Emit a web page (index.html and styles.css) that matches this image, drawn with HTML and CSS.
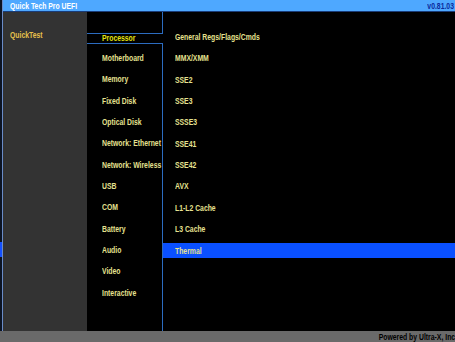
FILE: index.html
```html
<!DOCTYPE html>
<html lang="en">
<head>
    <meta charset="UTF-8">
    <meta name="viewport" content="width=device-width, initial-scale=1.0">
    <title>Quick Tech Pro UEFI</title>
    <link rel="stylesheet" href="styles.css">
</head>
<body>
    <div class="screen">
        <div class="edge">
            <div class="edge-mark"></div>
        </div>
        <div class="window">
            <div class="titlebar">
                <span class="txt title">Quick Tech Pro UEFI</span>
                <span class="txt version">v0.81.03</span>
            </div>
            <div class="panels">
                <div class="modes">
                    <div class="mode"><span class="txt">QuickTest</span></div>
                </div>
                <div class="groups">
                    <div class="tab-top"></div>
                    <div class="tab-active"><span class="txt">Processor</span></div>
                    <div class="tab-rest">
                        <div class="item"><span class="txt">Motherboard</span></div>
                        <div class="item"><span class="txt">Memory</span></div>
                        <div class="item"><span class="txt">Fixed Disk</span></div>
                        <div class="item"><span class="txt">Optical Disk</span></div>
                        <div class="item"><span class="txt">Network: Ethernet</span></div>
                        <div class="item"><span class="txt">Network: Wireless</span></div>
                        <div class="item"><span class="txt">USB</span></div>
                        <div class="item"><span class="txt">COM</span></div>
                        <div class="item"><span class="txt">Battery</span></div>
                        <div class="item"><span class="txt">Audio</span></div>
                        <div class="item"><span class="txt">Video</span></div>
                        <div class="item"><span class="txt">Interactive</span></div>
                    </div>
                </div>
                <div class="tests">
                    <div class="item"><span class="txt">General Regs/Flags/Cmds</span></div>
                    <div class="item"><span class="txt">MMX/XMM</span></div>
                    <div class="item"><span class="txt">SSE2</span></div>
                    <div class="item"><span class="txt">SSE3</span></div>
                    <div class="item"><span class="txt">SSSE3</span></div>
                    <div class="item"><span class="txt">SSE41</span></div>
                    <div class="item"><span class="txt">SSE42</span></div>
                    <div class="item"><span class="txt">AVX</span></div>
                    <div class="item"><span class="txt">L1-L2 Cache</span></div>
                    <div class="item"><span class="txt">L3 Cache</span></div>
                    <div class="item selected"><span class="txt">Thermal</span></div>
                </div>
            </div>
        </div>
    </div>
    <div class="footer"><span class="txt">Powered by Ultra-X, Inc</span></div>
</body>
</html>
```

FILE: styles.css
```css
* {
    box-sizing: border-box;
}
body {
    margin: 0;
    width: 455px;
    height: 342px;
    overflow: hidden;
    background: #000;
    font-family: "Liberation Sans", Arial, sans-serif;
    font-size: 9.5px;
    font-weight: bold;
}
/* the screen font is a narrow one, squeeze the labels */
.txt {
    display: inline-block;
    transform: scaleX(0.72);
    transform-origin: left center;
    white-space: nowrap;
}
.screen {
    display: flex;
    height: 331px;
}
.edge {
    width: 3px;
    background: #0c1424;
    border-right: 1px solid #6a8cc8;
}
.edge-mark {
    margin-top: 242px;
    width: 2px;
    height: 15px;
    background: #1450ff;
}
.window {
    flex: 1;
    display: flex;
    flex-direction: column;
}
.titlebar {
    height: 12px;
    background: #4ea8ff;
    border-bottom: 1px solid #1a3c78;
    display: flex;
    justify-content: space-between;
    align-items: center;
    padding-left: 7px;
    line-height: 11px;
    white-space: nowrap;
    overflow: hidden;
}
.title {
    color: #fff;
}
.version {
    color: #0c2a9c;
    transform-origin: right center;
    margin-right: 1px;
}
.panels {
    flex: 1;
    display: flex;
}
.modes {
    width: 84px;
    background: #333;
    padding: 15px 0 0 7px;
}
.mode {
    height: 15px;
    line-height: 15px;
    color: #e6c04c;
}
.groups {
    width: 76px;
    display: flex;
    flex-direction: column;
}
.tab-top {
    height: 22px;
    border-right: 1px solid #2c6cc0;
    border-bottom: 1px solid #2c6cc0;
}
.tab-active {
    height: 9px;
    line-height: 8px;
    padding-left: 15px;
    color: #e4e410;
}
.tab-rest {
    flex: 1;
    border-top: 1px solid #2c6cc0;
    border-right: 1px solid #2c6cc0;
    padding: 6px 0 0 15px;
    display: flex;
    flex-direction: column;
    gap: 6.33px;
}
.item {
    height: 15px;
    line-height: 15px;
    color: #e6e290;
    white-space: nowrap;
}
.tests {
    flex: 1;
    padding-top: 17px;
    display: flex;
    flex-direction: column;
    gap: 6.33px;
}
.tests .item {
    padding-left: 12px;
}
.tests .selected {
    margin-top: 1px;
    background: #0a50ff;
}
.footer {
    height: 11px;
    background: #6a6a6a;
    color: #000;
    text-align: right;
    line-height: 11px;
    white-space: nowrap;
    overflow: hidden;
}
.footer .txt {
    transform-origin: right center;
}
```
